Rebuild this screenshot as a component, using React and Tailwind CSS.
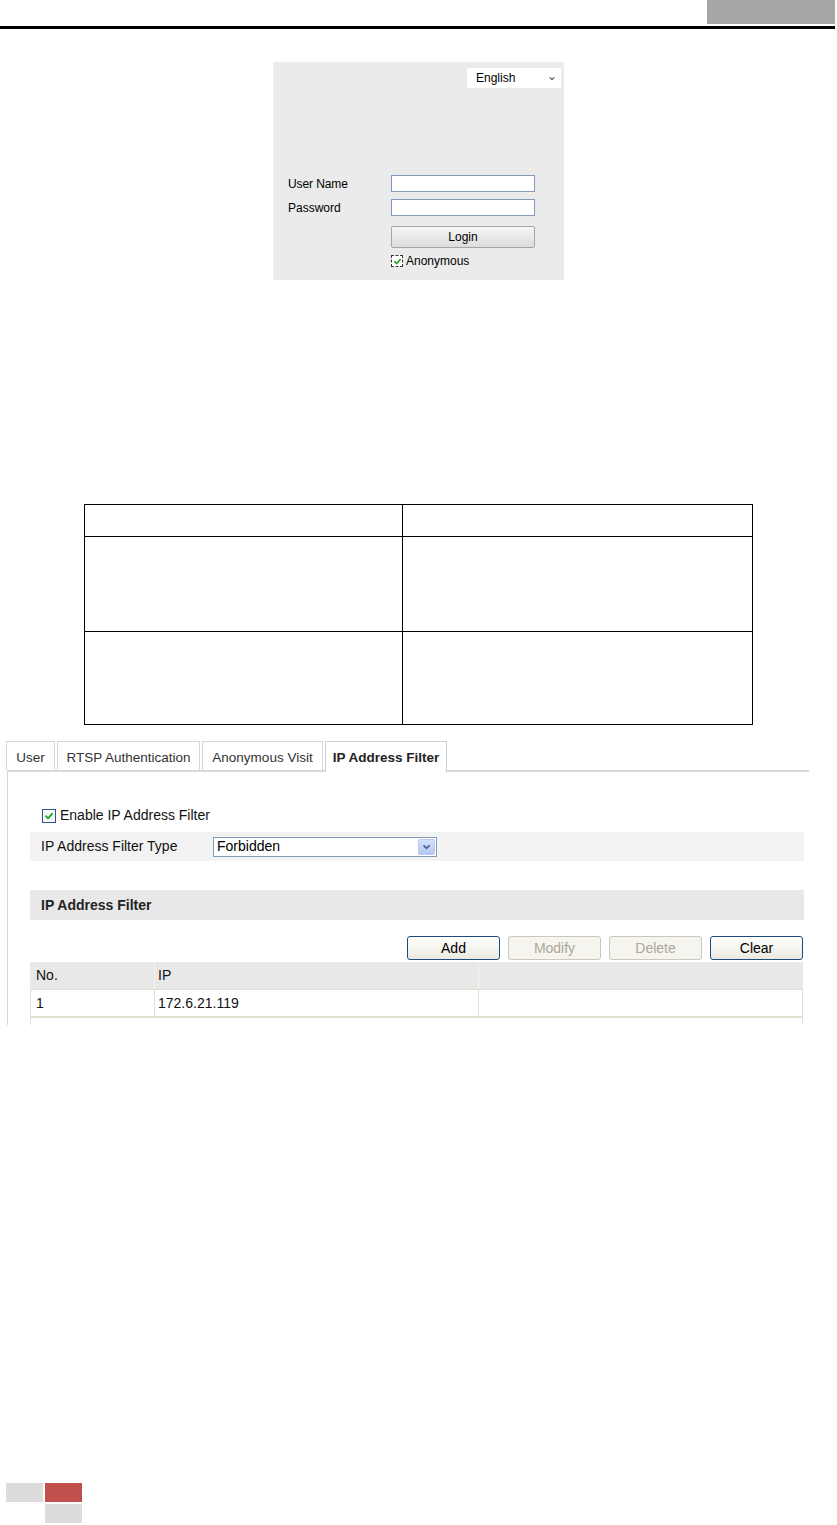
import React from "react";

function Check({ className = "" }) {
  return (
    <svg viewBox="0 0 10 10" className={className}>
      <path d="M2 5.2 L4.1 7.3 L8 2.8" fill="none" stroke="#21a121" strokeWidth="1.8" strokeLinecap="round" strokeLinejoin="round" />
    </svg>
  );
}

function Tab({ children, w, active }) {
  return (
    <div
      className={
        active
          ? "h-[31px] -mb-[2px] bg-white border border-b-0 border-[#cfcfcf] flex items-start justify-center pt-[6px] font-bold text-[13.5px] text-[#222] relative z-10 " + w
          : "h-[29px] bg-white border border-b-0 border-[#d6d6d6] flex items-start justify-center pt-[6px] text-[13.5px] text-[#333] " + w
      }
    >
      {children}
    </div>
  );
}

function Btn({ children, disabled }) {
  return (
    <div
      className={
        disabled
          ? "w-[93px] h-[24px] rounded-[3px] border border-[#cac8bb] bg-[#f5f4ee] text-[#aca899] text-[14px] flex items-center justify-center"
          : "w-[93px] h-[24px] rounded-[3px] border border-[#1f4a7e] bg-gradient-to-b from-white to-[#ebe9df] text-black text-[14px] flex items-center justify-center"
      }
    >
      {children}
    </div>
  );
}

export default function App() {
  return (
    <div className="w-[837px] h-[1525px] bg-white flex flex-col font-['Liberation_Sans',Arial,sans-serif] overflow-hidden">
      {/* header */}
      <div className="flex justify-end w-[835px]">
        <div className="w-[128px] h-[24px] bg-[#a6a6a6]" />
      </div>
      <div className="mt-[2px] h-[3px] w-[835px] bg-black" />

      {/* login box */}
      <div className="mt-[33px] ml-[273px] w-[291px] h-[218px] bg-[#ebebeb] flex flex-col">
        <div className="flex justify-end pt-[6px] pr-[3px]">
          <div className="w-[94px] h-[20px] bg-white flex items-center pl-[9px] pr-[6px] text-[12px] text-black">
            <span className="flex-1">English</span>
            <svg viewBox="0 0 8 6" className="w-[6px] h-[5px]">
              <path d="M1 1.5 L4 4.5 L7 1.5" fill="none" stroke="#555" strokeWidth="1.6" />
            </svg>
          </div>
        </div>
        <div className="mt-[87px] flex items-center h-[17px]">
          <div className="w-[118px] pl-[15px] text-[12px] text-black tracking-[-0.1px]">User Name</div>
          <div className="w-[144px] h-[17px] bg-white border border-[#7f9db9]" />
        </div>
        <div className="mt-[7px] flex items-center h-[17px]">
          <div className="w-[118px] pl-[15px] text-[12px] text-black">Password</div>
          <div className="w-[144px] h-[17px] bg-white border border-[#7f9db9]" />
        </div>
        <div className="mt-[10px] flex">
          <div className="ml-[118px] w-[144px] h-[22px] rounded-[2px] border border-[#a6a6a6] bg-gradient-to-b from-[#f6f6f6] to-[#dcdcdc] flex items-center justify-center text-[12px] text-black">
            Login
          </div>
        </div>
        <div className="mt-[7px] flex items-center h-[12px]">
          <div className="ml-[118px] w-[12px] h-[12px] border border-dashed border-[#333] bg-white flex items-center justify-center">
            <Check className="w-[9px] h-[9px]" />
          </div>
          <span className="ml-[3px] text-[12px] text-black">Anonymous</span>
        </div>
      </div>

      {/* empty table */}
      <div className="mt-[224px] ml-[84px] w-[669px] border border-black flex flex-col">
        <div className="flex h-[31px]">
          <div className="w-[318px] border-r border-black" />
          <div className="flex-1" />
        </div>
        <div className="flex h-[95px] border-t border-black">
          <div className="w-[318px] border-r border-black" />
          <div className="flex-1" />
        </div>
        <div className="flex h-[93px] border-t border-black">
          <div className="w-[318px] border-r border-black" />
          <div className="flex-1" />
        </div>
      </div>

      {/* tabs screenshot */}
      <div className="mt-[16px] ml-[6px] w-[803px] flex flex-col">
        <div className="flex gap-[2px] items-start h-[29px]">
          <Tab w="w-[49px]">User</Tab>
          <Tab w="w-[143px]">RTSP Authentication</Tab>
          <Tab w="w-[121px]">Anonymous Visit</Tab>
          <Tab w="w-[122px]" active>IP Address Filter</Tab>
        </div>
        <div className="ml-[1px] h-[255px] border-t-2 border-l border-[#d8d8d8] pl-[22px] pr-[5px] flex flex-col">
          <div className="mt-[36px] flex items-center h-[15px] pl-[12px]">
            <div className="w-[14px] h-[14px] border border-[#2b5a87] bg-[#f4f8fb] flex items-center justify-center">
              <Check className="w-[10px] h-[10px]" />
            </div>
            <span className="ml-[4px] text-[14px] text-[#111]">Enable IP Address Filter</span>
          </div>
          <div className="mt-[9px] h-[29px] bg-[#f3f3f3] flex items-center">
            <div className="w-[183px] pl-[11px] text-[14px] text-[#111]">IP Address Filter Type</div>
            <div className="w-[224px] h-[20px] bg-white border border-[#7f9db9] flex items-center pl-[3px] pr-[1px]">
              <span className="flex-1 text-[14px] text-black">Forbidden</span>
              <div className="w-[17px] h-[16px] rounded-[2px] bg-gradient-to-b from-[#d3e0fd] to-[#b3c8f5] border border-[#b9cbf3] flex items-center justify-center">
                <svg viewBox="0 0 10 7" className="w-[9px] h-[6px]">
                  <path d="M1.5 1.5 L5 5 L8.5 1.5" fill="none" stroke="#4d6185" strokeWidth="2" />
                </svg>
              </div>
            </div>
          </div>
          <div className="mt-[29px] h-[30px] bg-[#e8e8e8] flex items-center pl-[11px] text-[14px] font-bold text-[#222]">
            IP Address Filter
          </div>
          <div className="mt-[16px] flex justify-end gap-[8px] pr-[1px]">
            <Btn>Add</Btn>
            <Btn disabled>Modify</Btn>
            <Btn disabled>Delete</Btn>
            <Btn>Clear</Btn>
          </div>
          <div className="mt-[2px] w-[773px] flex flex-col">
            <div className="flex h-[27px] bg-[#e8e8e8] text-[14px] text-[#111]">
              <div className="w-[125px] pl-[6px] flex items-center border-r border-[#f4f4f4]">No.</div>
              <div className="w-[324px] pl-[3px] flex items-center border-r border-[#f4f4f4]">IP</div>
              <div className="flex-1" />
            </div>
            <div className="flex h-[28px] bg-white text-[14px] text-[#111] border border-t-0 border-[#e3e0d2]">
              <div className="w-[124px] pl-[5px] flex items-center border-r border-[#e3e0d2] border-t border-t-[#e3e0d2]">1</div>
              <div className="w-[324px] pl-[3px] flex items-center border-r border-[#e3e0d2] border-t border-t-[#e3e0d2]">172.6.21.119</div>
              <div className="flex-1 border-t border-[#e3e0d2]" />
            </div>
            <div className="h-[8px] border-l border-r border-t border-[#e3e0d2]" />
          </div>
        </div>
      </div>

      {/* footer blocks */}
      <div className="mt-[458px] ml-[6px] flex gap-[2px]">
        <div className="w-[37px] h-[19px] bg-[#dcdcdc]" />
        <div className="w-[37px] h-[19px] bg-[#c0504d]" />
      </div>
      <div className="mt-[2px] ml-[45px] w-[37px] h-[19px] bg-[#dcdcdc]" />
    </div>
  );
}
